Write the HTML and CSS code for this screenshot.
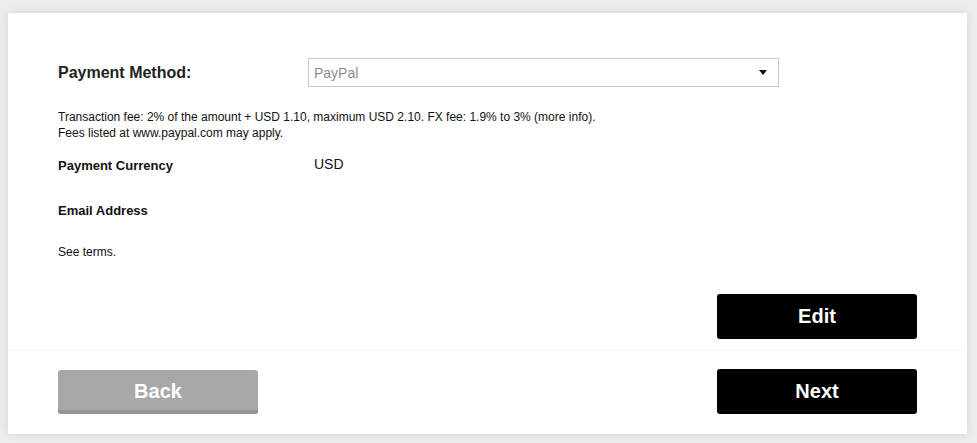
FILE: index.html
```html
<!DOCTYPE html>
<html lang="en">
<head>
<meta charset="utf-8">
<title>Payment Method</title>
<link rel="stylesheet" href="styles.css">
</head>
<body>
<div class="card">
  <section class="details">
    <div class="row method-row">
      <div class="method-label">Payment Method:</div>
      <div class="select">
        <span class="select-text">PayPal</span>
        <span class="select-arrow"></span>
      </div>
    </div>
    <p class="fee">Transaction fee: 2% of the amount + USD 1.10, maximum USD 2.10. FX fee: 1.9% to 3% (more info).<br>Fees listed at www.paypal.com may apply.</p>
    <div class="row info-row currency-row">
      <div class="info-label">Payment Currency</div>
      <div class="info-value">USD</div>
    </div>
    <div class="row info-row email-row">
      <div class="info-label">Email Address</div>
      <div class="info-value"></div>
    </div>
    <p class="terms">See terms.</p>
    <div class="edit-bar">
      <button class="btn btn-dark">Edit</button>
    </div>
  </section>
  <section class="actions">
    <button class="btn btn-back">Back</button>
    <button class="btn btn-dark">Next</button>
  </section>
</div>
</body>
</html>
```
FILE: styles.css
```css
html, body {
  margin: 0;
  padding: 0;
}
body {
  background: #ededed;
  font-family: "Liberation Sans", Arial, Helvetica, sans-serif;
  color: #111;
  padding: 13px 10px 9px 8px;
}
.card {
  background: #fff;
  box-shadow: 0 0 10px rgba(0, 0, 0, 0.10);
  width: 959px;
  height: 421px;
  display: flex;
  flex-direction: column;
}
.details {
  padding: 45px 50px 11px 50px;
  border-bottom: 1px solid #f9f9f9;
}
.row {
  display: flex;
  align-items: center;
}
.method-row {
  height: 29px;
}
.method-label {
  width: 250px;
  font-weight: bold;
  font-size: 16px;
  color: #222;
}
.select {
  width: 471px;
  height: 29px;
  box-sizing: border-box;
  border: 1px solid #c8c8c8;
  display: flex;
  align-items: center;
  justify-content: space-between;
  padding: 0 11px 0 5px;
}
.select-text {
  font-size: 14px;
  color: #8e8e8e;
  margin-top: 1px;
}
.select-arrow {
  width: 0;
  height: 0;
  border-left: 4px solid transparent;
  border-right: 4px solid transparent;
  border-top: 5px solid #111;
}
.fee {
  margin: 22px 0 0;
  font-size: 12px;
  line-height: 16px;
  color: #111;
}
.info-row {
  height: 16px;
}
.currency-row {
  margin-top: 16px;
}
.email-row {
  margin-top: 29px;
}
.info-label {
  width: 256px;
  font-weight: bold;
  font-size: 13px;
  color: #111;
}
.info-value {
  font-size: 14px;
  color: #111;
  margin-top: -2px;
}
.terms {
  margin: 26px 0 0;
  font-size: 12px;
  line-height: 16px;
  color: #111;
}
.edit-bar {
  display: flex;
  justify-content: flex-end;
  margin-top: 34px;
}
.actions {
  flex: 1;
  display: flex;
  justify-content: space-between;
  align-items: flex-start;
  padding: 18px 50px 0 50px;
}
.btn {
  width: 200px;
  height: 45px;
  border: none;
  border-radius: 3px;
  font-family: "Liberation Sans", Arial, Helvetica, sans-serif;
  font-weight: bold;
  font-size: 20px;
  color: #fff;
  padding: 0;
  cursor: pointer;
}
.btn-dark {
  background: #000;
}
.btn-back {
  background: #a8a8a8;
  box-shadow: inset 0 -4px 0 #959595;
  height: 44px;
  margin-top: 1px;
  padding-bottom: 2px;
}
```
